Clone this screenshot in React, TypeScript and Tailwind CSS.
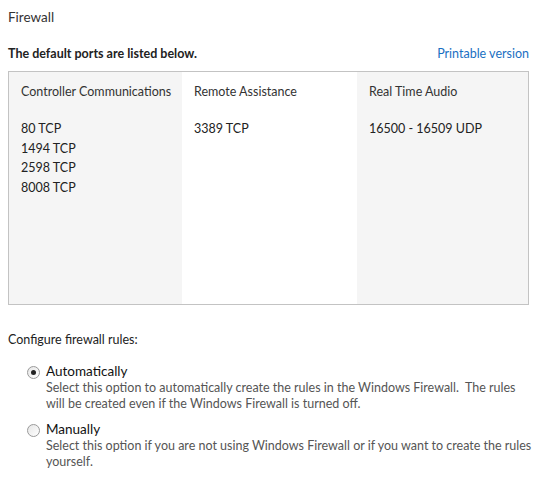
const columns = [
  { title: "Controller Communications", ports: ["80 TCP", "1494 TCP", "2598 TCP", "8008 TCP"], shaded: true },
  { title: "Remote Assistance", ports: ["3389 TCP"], shaded: false },
  { title: "Real Time Audio", ports: ["16500 - 16509 UDP"], shaded: true },
];

function Radio({ checked }: { checked: boolean }) {
  return (
    <span className="mt-[3px] flex h-[13px] w-[13px] shrink-0 items-center justify-center rounded-full border border-[#9a9a9a] bg-gradient-to-br from-[#e6e6e6] to-[#ffffff]">
      {checked && <span className="h-[5px] w-[5px] rounded-full bg-[#222]" />}
    </span>
  );
}

export default function App() {
  return (
    <main
      className="h-[481px] w-[540px] overflow-hidden bg-white text-[12.5px] text-[#222]"
      style={{ fontFamily: 'Lato, "Noto Sans", sans-serif' }}
    >
      <div className="pl-2 pr-[11px] pt-[8px]">
        <h1 className="text-[13.5px] leading-[18px] text-[#333]">Firewall</h1>

        <div className="mt-[19px] flex items-end justify-between">
          <p className="font-bold leading-[18px] text-[#222]">The default ports are listed below.</p>
          <a className="leading-[18px] text-[#1a6fc2]">Printable version</a>
        </div>

        {/* Ports table */}
        <div className="mt-[8px] grid h-[234px] grid-cols-[173px_175px_1fr] border border-[#c3c3c3]">
          {columns.map((col) => (
            <div
              key={col.title}
              className={`${col.shaded ? "bg-[#f5f5f5]" : "bg-white"} pl-[12px] pr-[8px] pt-[11px]`}
            >
              <div className="whitespace-nowrap leading-[18px] text-[#333]">{col.title}</div>
              <ul className="mt-[18px]">
                {col.ports.map((p) => (
                  <li key={p} className="leading-[19.5px] text-[#222]">
                    {p}
                  </li>
                ))}
              </ul>
            </div>
          ))}
        </div>

        <p className="mt-[26px] leading-[18px] text-[#222]">Configure firewall rules:</p>

        {/* Options */}
        <div className="mt-[14px] space-y-[9px] pl-[19px]">
          {[
            {
              label: "Automatically",
              checked: true,
              desc: "Select this option to automatically create the rules in the Windows Firewall.\u00a0 The rules will be created even if the Windows Firewall is turned off.",
            },
            {
              label: "Manually",
              checked: false,
              desc: "Select this option if you are not using Windows Firewall or if you want to create the rules yourself.",
            },
          ].map((o) => (
            <div key={o.label} className="flex gap-[6px]">
              <Radio checked={o.checked} />
              <div className="w-[490px] shrink-0">
                <div className="text-[13.5px] leading-[17px] text-[#111]">{o.label}</div>
                <p className="leading-[16px] text-[#555]">{o.desc}</p>
              </div>
            </div>
          ))}
        </div>
      </div>
    </main>
  );
}
